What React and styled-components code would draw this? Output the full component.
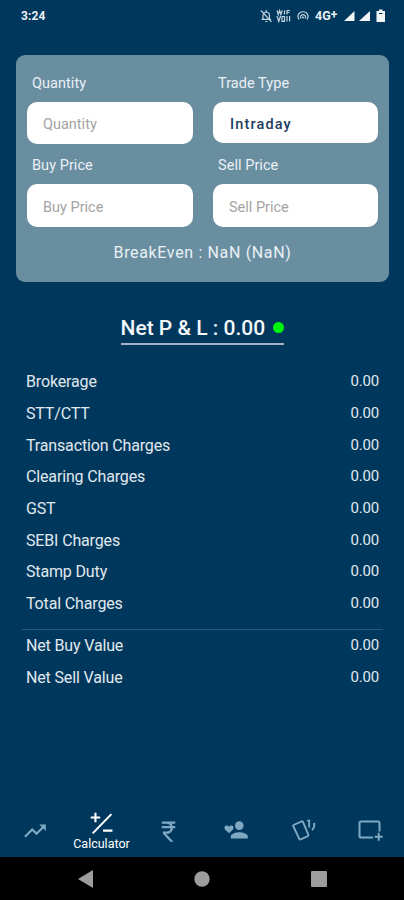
import React, { useState } from 'react';
import styled, { createGlobalStyle } from 'styled-components';

const GlobalStyle = createGlobalStyle`
* {
    box-sizing: border-box;
}

body {
    margin: 0;
    background: #00385d;
    font-family: Roboto, 'Liberation Sans', sans-serif;
}
`;

const Screen = styled.div`
display: flex;
flex-direction: column;
width: 404px;
height: 900px;
overflow: hidden;
background: #00385d;
color: #e9f0f6;
`;

const StatusBar = styled.header`
display: flex;
align-items: center;
justify-content: space-between;
height: 31px;
padding: 0 18px 0 21px;
`;

const Clock = styled.span`
font-size: 12px;
font-weight: 700;
line-height: 14px;
letter-spacing: 0.1px;
`;

const StatusIcons = styled.div`
display: flex;
align-items: center;

svg {
    display: block;
}
`;

const Network = styled.span`
width: 24px;
margin: 0 5px 0 5px;
font-size: 12.5px;
font-weight: 700;
line-height: 14px;
white-space: nowrap;

sup {
    font-size: 12px;
    line-height: 0;
    vertical-align: 1px;
}
`;

const Card = styled.section`
width: 373px;
height: 227px;
margin: 24px 0 0 16px;
padding: 18px 11px 0;
border-radius: 9px;
background: #698ea0;
`;

const FieldGrid = styled.div`
display: grid;
grid-template-columns: 166px 165px;
column-gap: 20px;
row-gap: 11px;
`;

const Field = styled.label`
display: flex;
flex-direction: column;
gap: 7px;
`;

const FieldLabel = styled.span`
padding-left: 5px;
font-size: 14.5px;
line-height: 22px;
letter-spacing: 0.05px;
`;

const inputBox = `
width: 100%;
border: 0;
border-radius: 10px;
background: #fff;
outline: none;
font-family: inherit;
`;

const Input = styled.input`
${inputBox}
height: ${props => props.$height || 42}px;
padding: 3px 15px 0 16px;
color: #00385d;
font-size: 14.5px;
letter-spacing: 0;

&::placeholder {
    color: #a3a3a3;
    opacity: 1;
}
`;

const TypeButton = styled.button`
${inputBox}
height: 41px;
padding: 3px 17px 0;
color: #1c3d60;
font-size: 14.5px;
font-weight: 500;
letter-spacing: 1.15px;
text-align: left;
`;

const BreakEven = styled.div`
margin-top: 16px;
font-size: 16px;
line-height: 20px;
letter-spacing: 0.65px;
text-align: center;
`;

const NetTotal = styled.div`
display: flex;
align-items: center;
align-self: center;
justify-content: space-between;
width: 163px;
height: 32px;
margin-top: 31px;
padding-bottom: 1px;
border-bottom: 2px solid #a3b5c5;
color: #f4f8fb;
font-size: 21px;
font-weight: 500;
line-height: 24px;
white-space: nowrap;
`;

const Dot = styled.span`
width: 11px;
height: 11px;
border-radius: 50%;
background: #00f50e;
`;

const List = styled.dl`
display: grid;
grid-auto-rows: 31.7px;
width: 361px;
margin: ${props => props.$top || 0}px 0 0 22px;
padding: 0 4px;
`;

const Row = styled.div`
display: flex;
align-items: center;
justify-content: space-between;
color: #e0e8ee;
font-size: 16px;
`;

const Name = styled.dt`
letter-spacing: -0.15px;
`;

const Amount = styled.dd`
margin: -1px 0 0;
font-size: 15px;
letter-spacing: -0.2px;
`;

const Divider = styled.hr`
width: 361px;
height: 1px;
margin: 9px 0 0 22px;
border: 0;
background: #29597a;
`;

const TabBar = styled.nav`
display: grid;
grid-template-columns: repeat(6, 67px);
height: 52px;
margin-top: auto;
padding-left: 1px;
`;

const Tab = styled.button`
display: flex;
flex-direction: column;
align-items: center;
padding: ${props => props.$active ? 6 : 13}px 0 0;
border: 0;
background: none;
color: ${props => props.$active ? '#fff' : '#7fa9c3'};
font-family: inherit;
font-size: 12.5px;
line-height: 16px;

svg {
    display: block;
    flex: none;
}
`;

const SystemBar = styled.footer`
display: flex;
align-items: center;
justify-content: center;
gap: 101px;
height: 43px;
padding: 1px 0 0 1px;
background: #000;

svg {
    display: block;
}
`;

const charges = [
  'Brokerage',
  'STT/CTT',
  'Transaction Charges',
  'Clearing Charges',
  'GST',
  'SEBI Charges',
  'Stamp Duty',
  'Total Charges'
];

const values = ['Net Buy Value', 'Net Sell Value'];

const icons = {
  Trend: <path d="M16 6l2.29 2.29-4.88 4.88-4-4L2 16.59 3.41 18l6-6 4 4 6.3-6.29L22 12V6z" />,
  Calculator: (
    <g fill="none" stroke="currentColor" strokeWidth="2">
      <path d="M3.5 21.5L21.5 3M6.2 1.7v9M1.7 6.2h9M13.5 18.8h9" />
    </g>
  ),
  Rupee: (
    <path d="M13.66 7c-.56-1.18-1.76-2-3.16-2H6V3h12v2h-3.26c.48.58.84 1.26 1.05 2H18v2h-2.02c-.25 2.8-2.61 5-5.48 5h-.73l6.73 7h-2.77L7 14v-2h3.5c1.76 0 3.22-1.3 3.46-3H6V7h7.66z" />
  ),
  Contacts: (
    <>
      <circle cx="15.3" cy="7.6" r="4.3" />
      <path d="M6.8 20.5v-2c0-2.8 5.6-4.2 8.5-4.2s8.5 1.4 8.5 4.2v2z" />
      <path d="M5 15.2L1.5 12C-.5 9.8.6 7.4 2.6 7.4c1 0 1.9.6 2.4 1.3.5-.7 1.4-1.3 2.4-1.3 2 0 3.1 2.4 1.1 4.6z" />
    </>
  ),
  Cards: (
    <g fill="none" stroke="currentColor" strokeWidth="1.9">
      <path d="M2.6 7L10.7 3.4Q11.6 3 12 3.9L17.3 16.7Q17.7 17.7 16.9 18.1L9.6 21.3Q8.7 21.7 8.3 20.8L2.2 8Q1.9 7.3 2.6 7z" />
      <path d="M16.2 2.6h2v7M23.2 4.8Q23.9 9 21 12.2" />
    </g>
  ),
  Add: (
    <g fill="none" stroke="currentColor" strokeWidth="2">
      <path d="M15 19.5H3.1Q1.5 19.5 1.5 17.9V5.1Q1.5 3.5 3.1 3.5h16.8Q21.5 3.5 21.5 5.1v8.4" />
      <path d="M20.7 14.8v8M16.7 18.8h8" />
    </g>
  )
};

const tabs = ['Trend', 'Calculator', 'Rupee', 'Contacts', 'Cards', 'Add'];

const sizes = { Trend: 26, Calculator: 25, Rupee: 27 };

const TabIcon = ({ name }) => (
  <svg
    width={sizes[name] || 24}
    height={sizes[name] || 24}
    viewBox="0 0 24 24"
    fill="currentColor"
    overflow="visible"
  >
    {icons[name]}
  </svg>
);

// muted bell, VoWiFi, hotspot
const LeftStatus = () => (
  <svg width="50" height="14" viewBox="0 0 50 14" fill="none" stroke="#c2d2de" strokeWidth="1.2">
    <path d="M3 10V6.4Q3 3.4 6.2 3 9.5 3.4 9.5 6.5V10M1.5 10.4h9.5M5.2 12.5h2.2M6.2 1v2M1 1.5L11.5 12.8" />
    <path d="M17 1.5l1.3 4 1.3-4 1.3 4 1.3-4M24.5 1.5v4M27 5.5v-4h3M27 3.5h2.5" />
    <path d="M17 7l1.8 5.5L20.5 7M22 7.5h2.5v4.8H22zM27 7v5.5M29.6 7v5.5" />
    <path d="M39 10.5Q36.7 6.5 39.5 4 43 1.5 46.5 4q2.8 2.5.5 6.5M41 9.5Q39.8 7.5 41.5 6.2 43 5.2 44.6 6.2 46.3 7.5 45 9.5" />
    <circle cx="43" cy="8.6" r="1" fill="#c2d2de" stroke="none" />
  </svg>
);

const Signals = () => (
  <svg width="42" height="14" viewBox="0 0 42 14" fill="#f1f5f8">
    <path d="M0 12L10.5 2v10zM15 12L26 2v10z" />
    <path d="M32.5 2H35V.5h3.5V2H41v11h-8.5z" />
    <path d="M35 4.5h3.5" stroke="#00385d" />
  </svg>
);

const App = () => {
  const [active, setActive] = useState('Calculator');
  const [form, setForm] = useState({ quantity: '', buy: '', sell: '' });

  const handleChange = (event) => {
    setForm({ ...form, [event.target.name]: event.target.value });
  };

  return (
    <>
      <GlobalStyle />
      <Screen>
        <StatusBar>
          <Clock>3:24</Clock>
          <StatusIcons>
            <LeftStatus />
            <Network>4G<sup>+</sup></Network>
            <Signals />
          </StatusIcons>
        </StatusBar>

        <Card>
          <FieldGrid>
            <Field>
              <FieldLabel>Quantity</FieldLabel>
              <Input name="quantity" placeholder="Quantity" value={form.quantity} onChange={handleChange} />
            </Field>
            <Field>
              <FieldLabel>Trade Type</FieldLabel>
              <TypeButton type="button">Intraday</TypeButton>
            </Field>
            <Field>
              <FieldLabel>Buy Price</FieldLabel>
              <Input $height={43} name="buy" placeholder="Buy Price" value={form.buy} onChange={handleChange} />
            </Field>
            <Field>
              <FieldLabel>Sell Price</FieldLabel>
              <Input $height={43} name="sell" placeholder="Sell Price" value={form.sell} onChange={handleChange} />
            </Field>
          </FieldGrid>
          <BreakEven>BreakEven : NaN (NaN)</BreakEven>
        </Card>

        <NetTotal>
          <span>Net P &amp; L : 0.00</span>
          <Dot />
        </NetTotal>

        <List $top={21}>
          {charges.map(name => (
            <Row key={name}>
              <Name>{name}</Name>
              <Amount>0.00</Amount>
            </Row>
          ))}
        </List>
        <Divider />
        <List>
          {values.map(name => (
            <Row key={name}>
              <Name>{name}</Name>
              <Amount>0.00</Amount>
            </Row>
          ))}
        </List>

        <TabBar>
          {tabs.map(name => (
            <Tab key={name} $active={active === name} onClick={() => setActive(name)}>
              <TabIcon name={name} />
              {active === name && <span>{name}</span>}
            </Tab>
          ))}
        </TabBar>

        <SystemBar>
          <svg width="15" height="18" fill="#9d9d9d">
            <path d="M0 9L15 0v18z" />
          </svg>
          <svg width="16" height="16" fill="#9d9d9d">
            <circle cx="8" cy="8" r="7.7" />
          </svg>
          <svg width="16" height="16" fill="#9d9d9d">
            <rect width="16" height="16" rx="1" />
          </svg>
        </SystemBar>
      </Screen>
    </>
  );
};

export default App;
